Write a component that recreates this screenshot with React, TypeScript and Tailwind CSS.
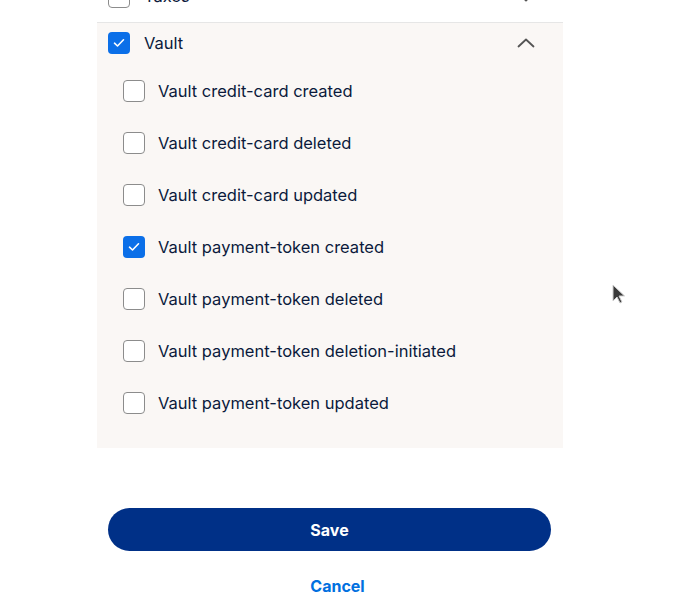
import { useState } from "react";

const items = [
  { id: "cc-created", label: "Vault credit-card created", on: false },
  { id: "cc-deleted", label: "Vault credit-card deleted", on: false },
  { id: "cc-updated", label: "Vault credit-card updated", on: false },
  { id: "pt-created", label: "Vault payment-token created", on: true },
  { id: "pt-deleted", label: "Vault payment-token deleted", on: false },
  { id: "pt-init", label: "Vault payment-token deletion-initiated", on: false },
  { id: "pt-updated", label: "Vault payment-token updated", on: false },
];

const Box = ({ checked }: { checked: boolean }) =>
  checked ? (
    <span className="flex h-[22px] w-[22px] shrink-0 items-center justify-center rounded-[4px] bg-[#0b6fe8]">
      <svg width="12" height="10" viewBox="0 0 12 10" fill="none">
        <path d="M1.5 5.2 4.5 8 10.5 1.8" stroke="#fff" strokeWidth="1.6" strokeLinecap="round" strokeLinejoin="round" />
      </svg>
    </span>
  ) : (
    <span className="h-[22px] w-[22px] shrink-0 rounded-[4px] border border-[#8c8c8c] bg-white" />
  );

const Chevron = ({ up }: { up: boolean }) => (
  <svg width="18" height="10" viewBox="0 0 18 10" fill="none" className={up ? "" : "rotate-180"}>
    <path d="M1.5 8.5 9 1.5l7.5 7" stroke="#545454" strokeWidth="1.8" strokeLinecap="round" strokeLinejoin="round" />
  </svg>
);

export default function App() {
  const [checked, setChecked] = useState<Record<string, boolean>>(
    Object.fromEntries(items.map((i) => [i.id, i.on]))
  );

  return (
    <div className="relative h-[598px] w-[673px] overflow-hidden bg-white text-[16.5px] text-[#0b1a3c] font-['Inter',Arial,sans-serif]">
      <div className="ml-[97px] w-[466px]">
        {/* Taxes row (scrolled mostly out of view) */}
        <div className="mt-[-29px] flex h-[52px] items-center border-b border-[#e6e6e6] pl-[11px] pr-[28px]">
          <Box checked={false} />
          <span className="ml-[14px] flex-1">Taxes</span>
          <Chevron up={false} />
        </div>

        {/* Vault group */}
        <div className="bg-[#faf7f5] pb-[19px]">
          <div className="flex h-[40px] items-center pl-[11px] pr-[28px]">
            <Box checked={true} />
            <span className="ml-[14px] flex-1">Vault</span>
            <Chevron up={true} />
          </div>
          <div className="pt-[2px]">
            {items.map((item) => (
              <label
                key={item.id}
                className="flex h-[52px] cursor-pointer items-center pl-[26px]"
                onClick={() => setChecked((c) => ({ ...c, [item.id]: !c[item.id] }))}
              >
                <Box checked={checked[item.id]} />
                <span className="ml-[13px]">{item.label}</span>
              </label>
            ))}
          </div>
        </div>

        <div className="mt-[60px] flex flex-col items-center pl-[11px] pr-[12px]">
          <button className="h-[43px] w-full rounded-full bg-[#003087] text-[16px] font-bold text-white">Save</button>
          <button className="ml-[16px] mt-[23px] text-[16px] font-bold text-[#0070e0]">Cancel</button>
        </div>
      </div>

      {/* mouse pointer */}
      <svg className="absolute left-[612px] top-[284px]" width="14" height="22" viewBox="0 0 14 22">
        <path d="M1 1v16l4-4 3 6 2-1-3-6h5.5z" fill="#3a3a3a" stroke="#cfcfcf" strokeWidth="1" />
      </svg>
    </div>
  );
}
